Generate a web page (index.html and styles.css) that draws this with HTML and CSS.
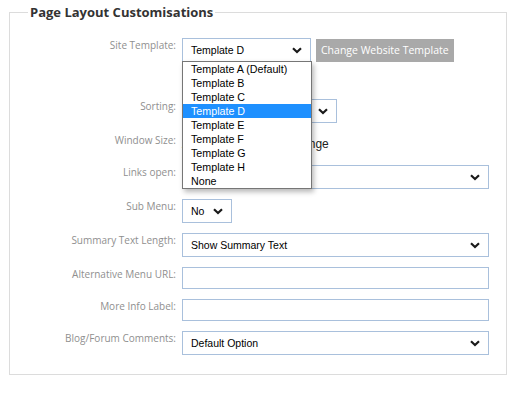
FILE: index.html
```html
<!DOCTYPE html>
<html>
<head>
<meta charset="utf-8">
<link rel="stylesheet" href="styles.css">
</head>
<body>
<fieldset class="panel">
  <legend class="legend">Page Layout Customisations</legend>
  <div class="form">
    <div class="label">Site Template:</div>
    <div class="control">
      <div class="select-wrap">
        <div class="select w-template"><span>Template D</span>
          <svg class="chev" width="10" height="7" viewBox="0 0 10 7"><path d="M1 1.2 L5 5 L9 1.2" fill="none" stroke="#1a1a1a" stroke-width="2.2"/></svg>
        </div>
        <ul class="dropdown">
          <li>Template A (Default)</li>
          <li>Template B</li>
          <li>Template C</li>
          <li class="active">Template D</li>
          <li>Template E</li>
          <li>Template F</li>
          <li>Template G</li>
          <li>Template H</li>
          <li>None</li>
        </ul>
      </div>
      <div class="button">Change Website Template</div>
    </div>

    <div class="spacer"></div><div class="spacer"></div>

    <div class="label">Sorting:</div>
    <div class="control">
      <div class="select w-sort"><span>Default</span>
        <svg class="chev" width="10" height="7" viewBox="0 0 10 7"><path d="M1 1.2 L5 5 L9 1.2" fill="none" stroke="#1a1a1a" stroke-width="2.2"/></svg>
      </div>
    </div>

    <div class="label">Window Size:</div>
    <div class="control"><span class="plain">Allow Window Size Change</span></div>

    <div class="label">Links open:</div>
    <div class="control">
      <div class="select w-full"><span>Same Window</span>
        <svg class="chev" width="10" height="7" viewBox="0 0 10 7"><path d="M1 1.2 L5 5 L9 1.2" fill="none" stroke="#1a1a1a" stroke-width="2.2"/></svg>
      </div>
    </div>

    <div class="label">Sub Menu:</div>
    <div class="control">
      <div class="select w-sub"><span>No</span>
        <svg class="chev" width="10" height="7" viewBox="0 0 10 7"><path d="M1 1.2 L5 5 L9 1.2" fill="none" stroke="#1a1a1a" stroke-width="2.2"/></svg>
      </div>
    </div>

    <div class="label">Summary Text Length:</div>
    <div class="control">
      <div class="select w-full"><span>Show Summary Text</span>
        <svg class="chev" width="10" height="7" viewBox="0 0 10 7"><path d="M1 1.2 L5 5 L9 1.2" fill="none" stroke="#1a1a1a" stroke-width="2.2"/></svg>
      </div>
    </div>

    <div class="label">Alternative Menu URL:</div>
    <div class="control"><div class="input w-full"></div></div>

    <div class="label">More Info Label:</div>
    <div class="control"><div class="input w-full"></div></div>

    <div class="label">Blog/Forum Comments:</div>
    <div class="control">
      <div class="select w-full"><span>Default Option</span>
        <svg class="chev" width="10" height="7" viewBox="0 0 10 7"><path d="M1 1.2 L5 5 L9 1.2" fill="none" stroke="#1a1a1a" stroke-width="2.2"/></svg>
      </div>
    </div>
  </div>
</fieldset>
</body>
</html>
```
FILE: styles.css
```css
html, body {
  margin: 0;
  padding: 0;
  background: #fff;
}
body {
  width: 516px;
  height: 400px;
  overflow: hidden;
  font-family: "Liberation Sans", Arial, sans-serif;
}
.panel {
  margin: 3px 0 0 9px;
  width: 498px;
  box-sizing: border-box;
  border: 1px solid #dcdcdc;
  padding: 0;
  min-width: 0;
}
.legend {
  margin-left: 18px;
  padding: 0 2px;
  font-family: "Open Sans", sans-serif;
  font-weight: 700;
  font-size: 13px;
  line-height: 18px;
  color: #333;
}
.form {
  display: grid;
  grid-template-columns: 166px 1fr;
  column-gap: 6px;
  row-gap: 10px;
  padding: 17px 17px 19px 0;
}
.label {
  text-align: right;
  font-family: "Open Sans", sans-serif;
  font-size: 10px;
  line-height: 14px;
  color: #8f8f8f;
  padding-top: 0;
}
.control {
  display: flex;
  align-items: center;
  gap: 5px;
  min-height: 22px;
}
.spacer {
  height: 17px;
}
.select-wrap {
  position: relative;
}
.select {
  box-sizing: border-box;
  height: 24px;
  border: 1px solid #a9c0dc;
  background: #fff;
  display: flex;
  align-items: center;
  justify-content: space-between;
  padding: 0 8px 0 8px;
  font-size: 10.5px;
  color: #000;
}
.chev {
  display: block;
  flex: none;
}
.w-template { width: 129px; }
.w-sort { width: 155px; }
.w-sub { width: 50px; }
.w-full { width: 307px; }
.input {
  box-sizing: border-box;
  height: 22px;
  border: 1px solid #a9c0dc;
  background: #fff;
}
.button {
  box-sizing: border-box;
  height: 23px;
  background: #a9a9a9;
  color: #fff;
  font-family: "Open Sans", sans-serif;
  font-size: 10.5px;
  display: flex;
  align-items: center;
  padding: 0 5px;
  white-space: nowrap;
}
.plain {
  font-size: 12px;
  color: #222;
  padding-top: 0;
}
.dropdown {
  position: absolute;
  left: 0;
  top: 23px;
  width: 130px;
  box-sizing: border-box;
  margin: 0;
  padding: 0;
  list-style: none;
  background: #fff;
  border: 1px solid #767676;
  box-shadow: 2px 3px 5px rgba(0, 0, 0, 0.28);
  z-index: 5;
}
.dropdown li {
  height: 14px;
  line-height: 14px;
  padding-left: 8px;
  font-size: 10.7px;
  color: #000;
  white-space: nowrap;
}
.dropdown li.active {
  background: #1e90ff;
  color: #fff;
}
```
